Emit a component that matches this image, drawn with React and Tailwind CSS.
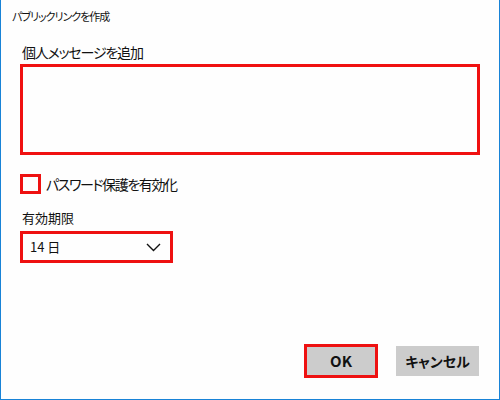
import React from "react";

const font = {
  fontFamily: '"Noto Sans CJK JP", "Noto Sans", sans-serif',
  fontFeatureSettings: '"palt"',
};

export default function App() {
  return (
    <div
      style={font}
      className="w-[500px] h-[400px] bg-[#fefefe] border-l border-r border-b border-[#1883d7] flex flex-col text-[#111]"
    >
      {/* TITLE */}
      <div className="pt-[8px] pl-[11px] text-[11px] leading-[16px] tracking-[-1px]">パブリックリンクを作成</div>

      <div className="px-[19px] flex flex-col">
        {/* MESSAGE */}
        <div className="mt-[18px] pl-[2px] text-[14px] leading-[20px] tracking-[-1.2px]">個人メッセージを追加</div>
        <div className="mt-[2px] h-[91px] border-[3px] border-[#f01111] bg-[#fefefe]" />

        {/* PASSWORD */}
        <div className="mt-[19px] flex items-center gap-[5px]">
          <div className="w-[21px] h-[20px] border-[3px] border-[#ee1111]" />
          <span className="text-[14px] leading-[20px] tracking-[-1.4px]">パスワード保護を有効化</span>
        </div>

        {/* EXPIRY */}
        <div className="mt-[14px] pl-[2px] text-[13px] leading-[20px]">有効期限</div>
        <div className="mt-[3px] w-[153px] h-[32px] border-[3px] border-[#ee1111] flex items-center justify-between pl-[7px] pr-[9px]">
          <span className="text-[13px] leading-[20px]">14 日</span>
          <svg width="15" height="9" viewBox="0 0 15 9" fill="none">
            <path d="M1 1l6.5 6.5L14 1" stroke="#111" strokeWidth="1.4" />
          </svg>
        </div>
      </div>

      {/* BUTTONS */}
      <div className="mt-auto mb-[21px] pr-[20px] flex justify-end items-center gap-[18px]">
        <button className="w-[74px] h-[34px] bg-[#cccccc] border-[3px] border-[#ee1111] text-[15px] font-bold leading-[20px]">
          OK
        </button>
        <button className="w-[83px] h-[30px] bg-[#cccccc] text-[14px] font-semibold leading-[20px]">
          キャンセル
        </button>
      </div>
    </div>
  );
}
